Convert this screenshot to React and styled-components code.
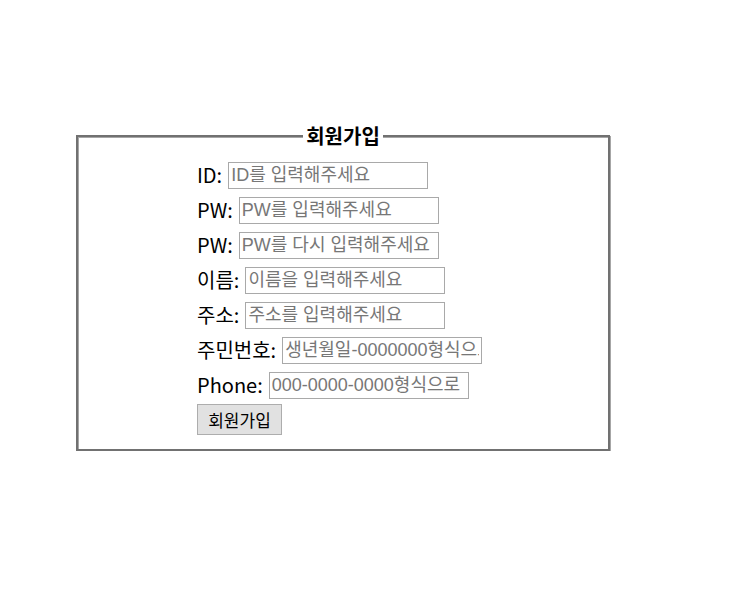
import React from 'react';
import styled, { createGlobalStyle } from 'styled-components';

const GlobalStyle = createGlobalStyle`
  body {
    margin: 8px;
    background: #fff;
    font-family: "Noto Sans CJK KR", "Noto Sans", sans-serif;
    color: #000;
  }
`;

const Page = styled.div`
  padding-top: 115px;
`;

const Fieldset = styled.fieldset`
  box-sizing: border-box;
  width: 534px;
  margin: 0 0 0 68px;
  padding: 13px 10px 14px;
  border: 2px solid #717171;
  box-shadow: inset 1px 1px 0 #a6a6a6, 1px 1px 0 #a6a6a6;
  min-inline-size: 0;
`;

const Legend = styled.legend`
  margin: 0 auto;
  padding: 0 3px;
  background: #fff;
  font-size: 20px;
  font-weight: 700;
  line-height: 26px;
`;

const Form = styled.form`
  display: flex;
  flex-direction: column;
  align-items: flex-start;
  gap: 8px;
  margin: 0;
  padding-left: 109px;
`;

const Row = styled.div`
  display: flex;
  align-items: center;
  gap: 6px;
  height: 27px;
`;

const Label = styled.label`
  font-size: 20px;
  line-height: 27px;
  padding-bottom: 3px;
  white-space: nowrap;
`;

const Input = styled.input`
  box-sizing: border-box;
  width: 200px;
  height: 27px;
  margin: 0;
  padding: 0 2px;
  border: 1px solid #a9a9a9;
  border-radius: 0;
  font-family: "Liberation Sans", "Noto Sans CJK KR", sans-serif;
  font-size: 18px;
  outline: none;

  &::placeholder {
    color: #777;
  }
`;

const Submit = styled.button`
  box-sizing: border-box;
  width: 85px;
  height: 31px;
  margin-top: -3px;
  padding: 0;
  background: #e1e1e1;
  border: 1px solid #adadad;
  border-radius: 0;
  font-family: "Noto Sans CJK KR", sans-serif;
  font-size: 17px;
  color: #000;
`;

const fields = [
  { id: 'id', label: 'ID:', placeholder: 'ID를 입력해주세요' },
  { id: 'pw', label: 'PW:', placeholder: 'PW를 입력해주세요', type: 'password' },
  { id: 'pw2', label: 'PW:', placeholder: 'PW를 다시 입력해주세요', type: 'password' },
  { id: 'name', label: '이름:', placeholder: '이름을 입력해주세요' },
  { id: 'addr', label: '주소:', placeholder: '주소를 입력해주세요' },
  { id: 'jumin', label: '주민번호:', placeholder: '생년월일-0000000형식으로' },
  { id: 'phone', label: 'Phone:', placeholder: '000-0000-0000형식으로' },
];

export default function App() {
  return (
    <Page>
      <GlobalStyle />
      <Fieldset>
        <Legend>회원가입</Legend>
        <Form onSubmit={(e) => e.preventDefault()}>
          {fields.map((f) => (
            <Row key={f.id}>
              <Label htmlFor={f.id}>{f.label}</Label>
              <Input id={f.id} type={f.type || 'text'} placeholder={f.placeholder} />
            </Row>
          ))}
          <Submit type="submit">회원가입</Submit>
        </Form>
      </Fieldset>
    </Page>
  );
}
